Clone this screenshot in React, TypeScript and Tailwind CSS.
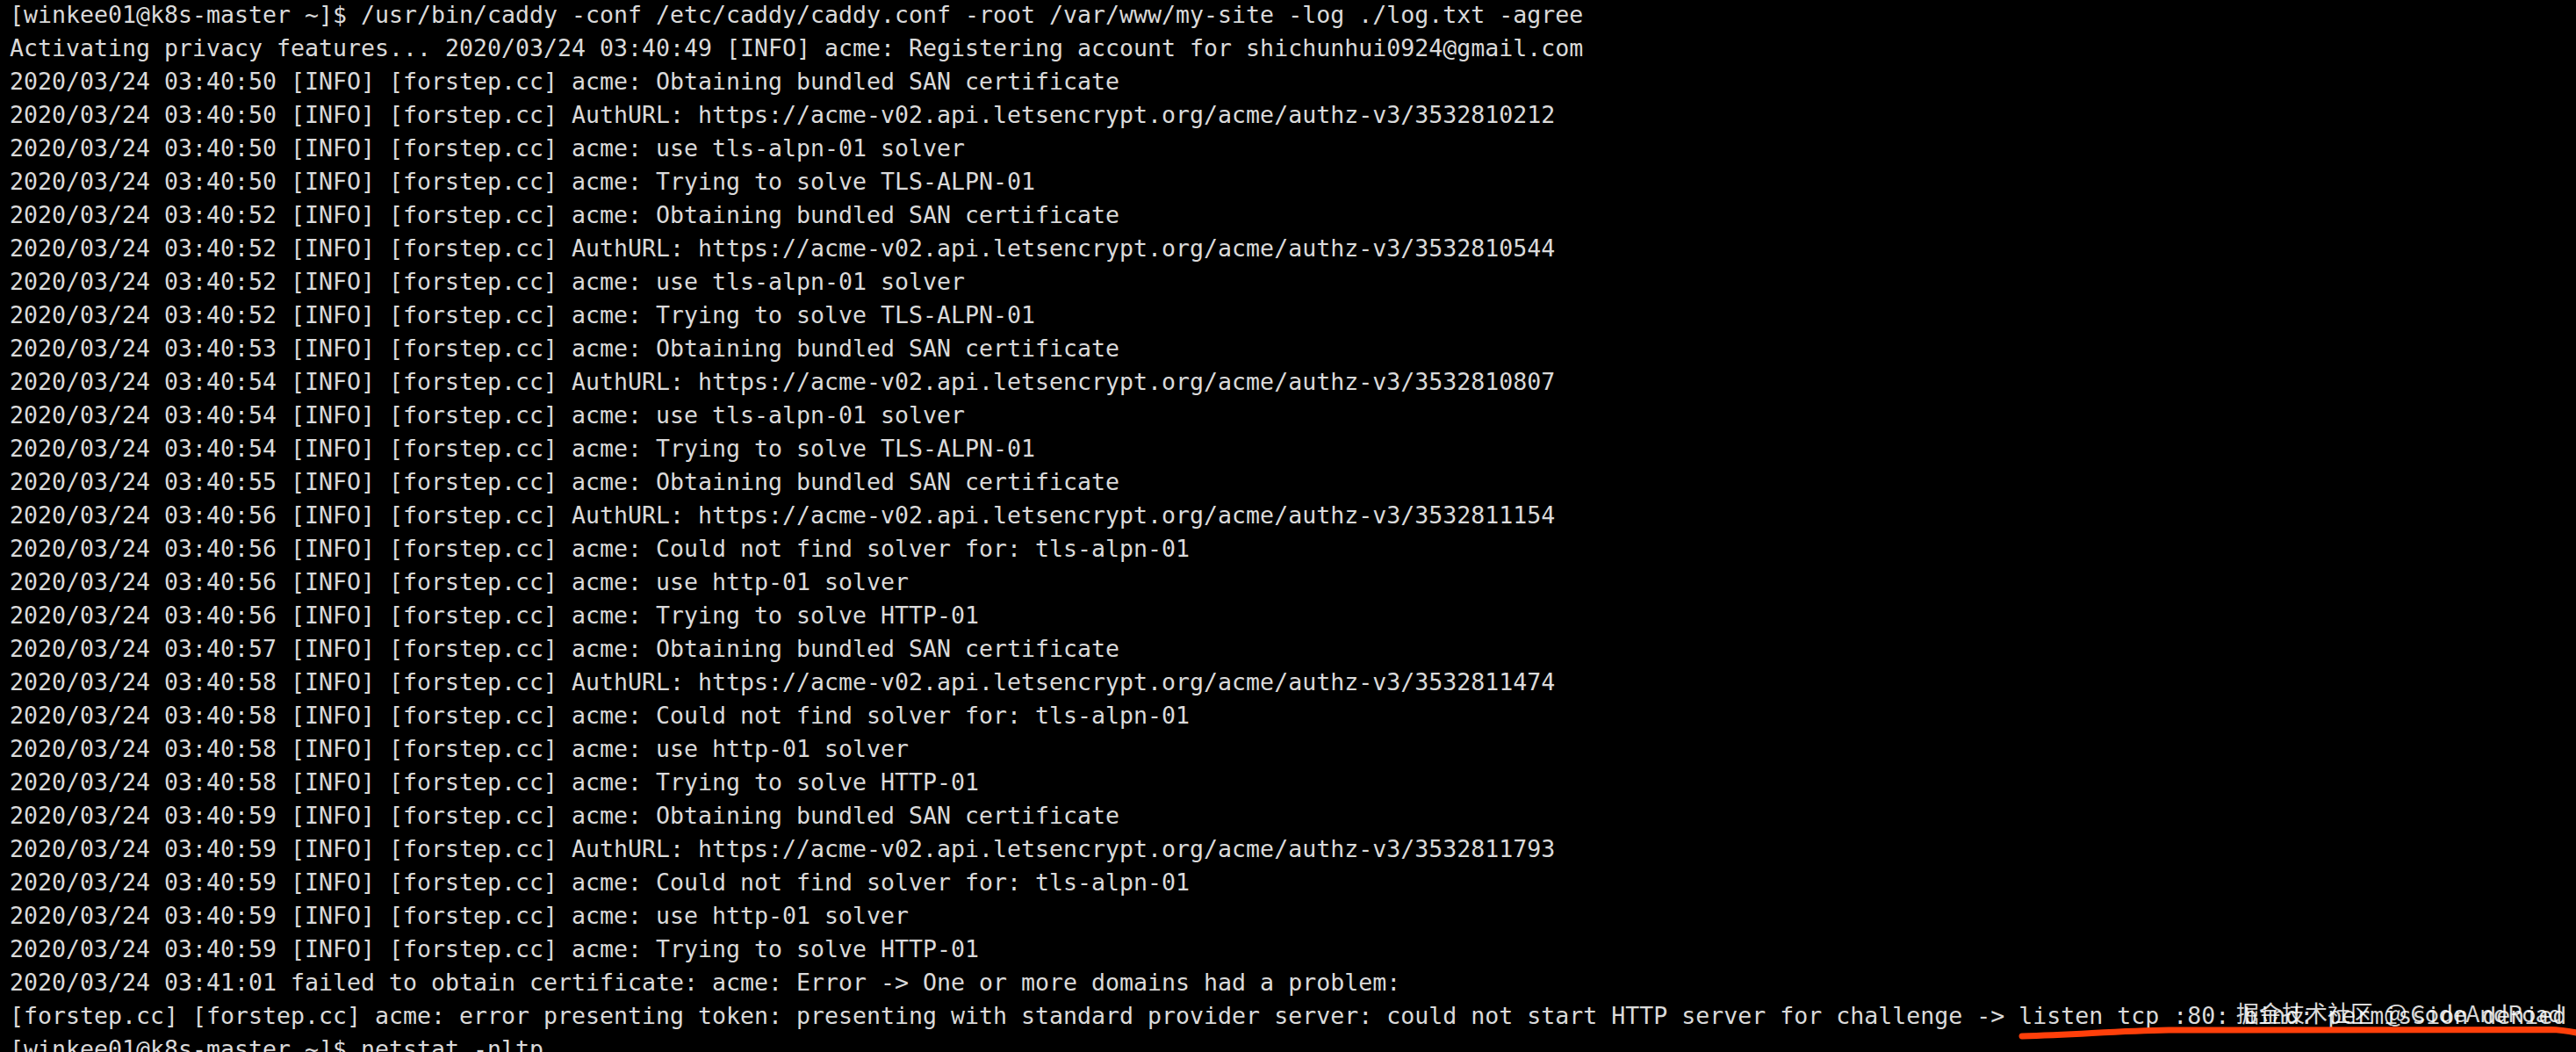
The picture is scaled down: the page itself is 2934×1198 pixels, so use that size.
import React from "react";

const lines: string[] = [
  "[winkee01@k8s-master ~]$ /usr/bin/caddy -conf /etc/caddy/caddy.conf -root /var/www/my-site -log ./log.txt -agree",
  "Activating privacy features... 2020/03/24 03:40:49 [INFO] acme: Registering account for shichunhui0924@gmail.com",
  "2020/03/24 03:40:50 [INFO] [forstep.cc] acme: Obtaining bundled SAN certificate",
  "2020/03/24 03:40:50 [INFO] [forstep.cc] AuthURL: https://acme-v02.api.letsencrypt.org/acme/authz-v3/3532810212",
  "2020/03/24 03:40:50 [INFO] [forstep.cc] acme: use tls-alpn-01 solver",
  "2020/03/24 03:40:50 [INFO] [forstep.cc] acme: Trying to solve TLS-ALPN-01",
  "2020/03/24 03:40:52 [INFO] [forstep.cc] acme: Obtaining bundled SAN certificate",
  "2020/03/24 03:40:52 [INFO] [forstep.cc] AuthURL: https://acme-v02.api.letsencrypt.org/acme/authz-v3/3532810544",
  "2020/03/24 03:40:52 [INFO] [forstep.cc] acme: use tls-alpn-01 solver",
  "2020/03/24 03:40:52 [INFO] [forstep.cc] acme: Trying to solve TLS-ALPN-01",
  "2020/03/24 03:40:53 [INFO] [forstep.cc] acme: Obtaining bundled SAN certificate",
  "2020/03/24 03:40:54 [INFO] [forstep.cc] AuthURL: https://acme-v02.api.letsencrypt.org/acme/authz-v3/3532810807",
  "2020/03/24 03:40:54 [INFO] [forstep.cc] acme: use tls-alpn-01 solver",
  "2020/03/24 03:40:54 [INFO] [forstep.cc] acme: Trying to solve TLS-ALPN-01",
  "2020/03/24 03:40:55 [INFO] [forstep.cc] acme: Obtaining bundled SAN certificate",
  "2020/03/24 03:40:56 [INFO] [forstep.cc] AuthURL: https://acme-v02.api.letsencrypt.org/acme/authz-v3/3532811154",
  "2020/03/24 03:40:56 [INFO] [forstep.cc] acme: Could not find solver for: tls-alpn-01",
  "2020/03/24 03:40:56 [INFO] [forstep.cc] acme: use http-01 solver",
  "2020/03/24 03:40:56 [INFO] [forstep.cc] acme: Trying to solve HTTP-01",
  "2020/03/24 03:40:57 [INFO] [forstep.cc] acme: Obtaining bundled SAN certificate",
  "2020/03/24 03:40:58 [INFO] [forstep.cc] AuthURL: https://acme-v02.api.letsencrypt.org/acme/authz-v3/3532811474",
  "2020/03/24 03:40:58 [INFO] [forstep.cc] acme: Could not find solver for: tls-alpn-01",
  "2020/03/24 03:40:58 [INFO] [forstep.cc] acme: use http-01 solver",
  "2020/03/24 03:40:58 [INFO] [forstep.cc] acme: Trying to solve HTTP-01",
  "2020/03/24 03:40:59 [INFO] [forstep.cc] acme: Obtaining bundled SAN certificate",
  "2020/03/24 03:40:59 [INFO] [forstep.cc] AuthURL: https://acme-v02.api.letsencrypt.org/acme/authz-v3/3532811793",
  "2020/03/24 03:40:59 [INFO] [forstep.cc] acme: Could not find solver for: tls-alpn-01",
  "2020/03/24 03:40:59 [INFO] [forstep.cc] acme: use http-01 solver",
  "2020/03/24 03:40:59 [INFO] [forstep.cc] acme: Trying to solve HTTP-01",
  "2020/03/24 03:41:01 failed to obtain certificate: acme: Error -> One or more domains had a problem:",
  "[forstep.cc] [forstep.cc] acme: error presenting token: presenting with standard provider server: could not start HTTP server for challenge -> listen tcp :80: bind: permission denied",
  "[winkee01@k8s-master ~]$ netstat -nltp",
];

export default function App() {
  return (
    <div className="relative h-[1198px] w-full overflow-hidden bg-black">
      <div className="-mt-[2px] flex flex-col pl-[11px] font-['DejaVu_Sans_Mono','Liberation_Mono',monospace] text-[26.58px] leading-[38px] text-[#dadada]">
        {lines.map((l, i) => (
          <div key={i} className="whitespace-pre">
            {l}
          </div>
        ))}
      </div>

      {/* red annotation underline */}
      <svg
        className="pointer-events-none absolute left-0 top-0"
        width="2934"
        height="1198"
        viewBox="0 0 2934 1198"
      >
        <path
          d="M2303 1180 C2370 1178 2410 1174 2470 1173 L2905 1172.5 Q2920 1173 2940 1177"
          fill="none"
          stroke="#ff3f0a"
          strokeWidth="7"
          strokeLinecap="round"
        />
      </svg>

      {/* watermark */}
      <div className="pointer-events-none absolute left-[2547px] top-[1138px] flex items-baseline whitespace-pre font-['Noto_Sans_CJK_SC','Noto_Sans',sans-serif] text-[26px] leading-none text-white/85">
        <span>掘金技术社区</span>
        <span className="ml-[12px] text-[28px]">@</span>
        <span className="ml-[4px]">CodeAndRoad</span>
      </div>
    </div>
  );
}
